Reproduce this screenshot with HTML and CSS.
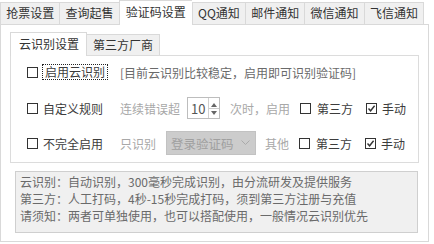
FILE: index.html
```html
<!DOCTYPE html>
<html>
<head>
<meta charset="utf-8">
<link rel="stylesheet" href="styles.css">
</head>
<body>
<div class="tabs">
  <div class="tab">抢票设置</div>
  <div class="tab">查询起售</div>
  <div class="tab active">验证码设置</div>
  <div class="tab">QQ通知</div>
  <div class="tab">邮件通知</div>
  <div class="tab">微信通知</div>
  <div class="tab">飞信通知</div>
</div>
<div class="panel">
  <div class="subtabs">
    <div class="subtab active">云识别设置</div>
    <div class="subtab">第三方厂商</div>
  </div>
  <div class="group">
    <div class="row">
      <div class="col1"><span class="cb"></span><span class="lbl focus">启用云识别</span></div>
      <span class="hint">[目前云识别比较稳定，启用即可识别验证码]</span>
    </div>
    <div class="row">
      <div class="col1"><span class="cb"></span><span class="lbl">自定义规则</span></div>
      <span class="dim">连续错误超</span>
      <div class="spin">
        <span class="spin-val">10</span>
        <span class="spin-btns">
          <svg width="10" height="20" viewBox="0 0 10 20"><path d="M5 5 L8 9 L2 9 Z" fill="#666"/><line x1="0" y1="10.5" x2="10" y2="10.5" stroke="#ccc"/><path d="M2 13 L8 13 L5 17 Z" fill="#666"/></svg>
        </span>
      </div>
      <span class="dim after-spin">次时，启用</span>
      <span class="cb opt"></span><span class="lbl">第三方</span>
      <span class="cb checked opt2"><svg width="9" height="9" viewBox="0 0 9 9"><path d="M1.5 4.5 L3.6 6.8 L7.6 1.8" fill="none" stroke="#333" stroke-width="1.4"/></svg></span><span class="lbl">手动</span>
    </div>
    <div class="row">
      <div class="col1"><span class="cb"></span><span class="lbl">不完全启用</span></div>
      <span class="dim">只识别</span>
      <div class="select">
        <span>登录验证码</span>
        <svg width="9" height="6" viewBox="0 0 9 6"><path d="M0.5 0.5 L4.5 4.5 L8.5 0.5" fill="none" stroke="#aaa" stroke-width="1"/></svg>
      </div>
      <span class="dim after-select">其他</span>
      <span class="cb opt"></span><span class="lbl">第三方</span>
      <span class="cb checked opt2"><svg width="9" height="9" viewBox="0 0 9 9"><path d="M1.5 4.5 L3.6 6.8 L7.6 1.8" fill="none" stroke="#333" stroke-width="1.4"/></svg></span><span class="lbl">手动</span>
    </div>
  </div>
  <div class="info">
    <div>云识别：自动识别，300毫秒完成识别，由分流研发及提供服务</div>
    <div>第三方：人工打码，4秒-15秒完成打码，须到第三方注册与充值</div>
    <div>请须知：两者可单独使用，也可以搭配使用，一般情况云识别优先</div>
  </div>
</div>
</body>
</html>
```

FILE: styles.css
```css
* { box-sizing: border-box; }
html, body { margin: 0; padding: 0; }
body {
  width: 434px;
  height: 244px;
  background: #fff;
  font-family: "Noto Sans CJK SC", "Microsoft YaHei", sans-serif;
  font-size: 12px;
  color: #3c3c3c;
  overflow: hidden;
}
.tabs {
  display: flex;
  align-items: flex-end;
  height: 24px;
}
.tab {
  height: 22px;
  line-height: 20px;
  padding: 0 5.2px;
  background: #f0f0f0;
  border: 1px solid #d9d9d9;
  border-bottom: none;
  border-right: none;
  white-space: nowrap;
  color: #333;
}
.tab:last-child { border-right: 1px solid #d9d9d9; }
.tab.active {
  height: 25px;
  line-height: 22px;
  background: #fff;
  margin-bottom: -1px;
  position: relative;
  z-index: 1;
  padding: 0 6px;
}
.panel {
  width: 429px;
  height: 218px;
  border: 1px solid #d9d9d9;
  padding: 7px 9px 0 9px;
}
.subtabs {
  display: flex;
  align-items: flex-end;
  height: 23px;
}
.subtab {
  height: 21px;
  line-height: 20px;
  padding: 0 6px;
  background: #f0f0f0;
  border: 1px solid #d9d9d9;
  border-bottom: none;
  border-left: none;
  white-space: nowrap;
  color: #333;
}
.subtab.active {
  height: 24px;
  line-height: 22px;
  padding: 0 7px 0 8px;
  background: #fff;
  border-left: 1px solid #d9d9d9;
  margin-bottom: -1px;
  position: relative;
  z-index: 1;
}
.group {
  width: 409px;
  border: 1px solid #dcdcdc;
  padding: 5px 0 8px 16px;
  display: flex;
  flex-direction: column;
  gap: 14px;
}
.row {
  display: flex;
  align-items: center;
  height: 22px;
  white-space: nowrap;
}
.row:last-child { margin-top: -1px; }
.col1 {
  width: 93px;
  display: flex;
  align-items: center;
}
.cb {
  width: 11px;
  height: 11px;
  border: 1px solid #333;
  display: inline-flex;
  align-items: center;
  justify-content: center;
  flex: none;
  background: #fff;
  margin-right: 5px;
}
.lbl { color: #3c3c3c; }
.focus {
  border: 1px dotted #222;
  padding: 0 2px;
  line-height: 14px;
  margin-left: -1px;
}
.hint { color: #6a6a6a; }
.dim { color: #a8a8a8; }
.spin {
  width: 33px;
  height: 22px;
  border: 1px solid #bdbdbd;
  margin-left: 7px;
  display: flex;
  align-items: center;
  justify-content: space-between;
  padding-left: 3px;
  background: #fff;
}
.spin-val { color: #555; font-size: 13px; }
.spin-btns {
  display: flex;
  width: 11px;
  height: 20px;
  border-left: 1px solid #d0d0d0;
}
.after-spin { margin-left: 10px; }
.opt { margin-left: 10px; margin-right: 6px; }
.opt2 { margin-left: 13px; margin-right: 5px; }
.select {
  width: 90px;
  height: 24px;
  margin-left: 10px;
  background: #cccccc;
  border: 1px solid #c2c2c2;
  color: #a0a0a0;
  display: flex;
  align-items: center;
  justify-content: space-between;
  padding: 0 5px 0 4px;
  font-size: 12.5px;
}
.after-select { margin-left: 9px; }
.info {
  margin: 8px 1px 0 5px;
  width: 403px;
  height: 62px;
  background: #f0f0f0;
  border: 1px solid #cfcfcf;
  padding: 1px 5px 0 4px;
  color: #6a6a6a;
  line-height: 17px;
  white-space: nowrap;
}
```
